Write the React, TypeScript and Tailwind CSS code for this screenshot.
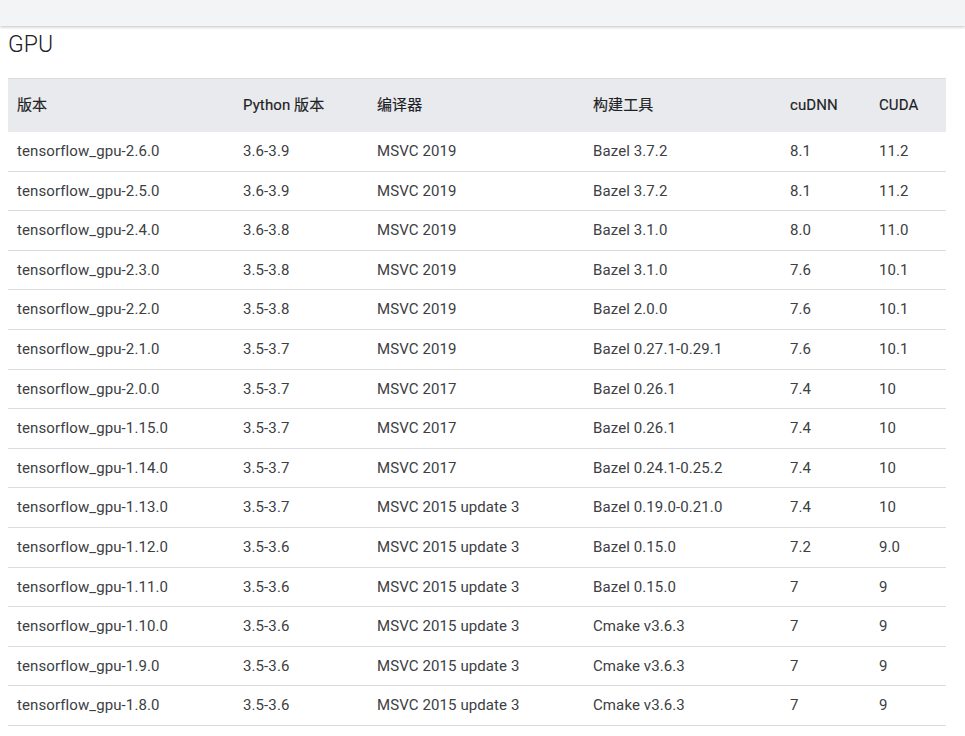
import React from 'react';

type Row = [string, string, string, string, string, string];

const rows: Row[] = [
  ['tensorflow_gpu-2.6.0', '3.6-3.9', 'MSVC 2019', 'Bazel 3.7.2', '8.1', '11.2'],
  ['tensorflow_gpu-2.5.0', '3.6-3.9', 'MSVC 2019', 'Bazel 3.7.2', '8.1', '11.2'],
  ['tensorflow_gpu-2.4.0', '3.6-3.8', 'MSVC 2019', 'Bazel 3.1.0', '8.0', '11.0'],
  ['tensorflow_gpu-2.3.0', '3.5-3.8', 'MSVC 2019', 'Bazel 3.1.0', '7.6', '10.1'],
  ['tensorflow_gpu-2.2.0', '3.5-3.8', 'MSVC 2019', 'Bazel 2.0.0', '7.6', '10.1'],
  ['tensorflow_gpu-2.1.0', '3.5-3.7', 'MSVC 2019', 'Bazel 0.27.1-0.29.1', '7.6', '10.1'],
  ['tensorflow_gpu-2.0.0', '3.5-3.7', 'MSVC 2017', 'Bazel 0.26.1', '7.4', '10'],
  ['tensorflow_gpu-1.15.0', '3.5-3.7', 'MSVC 2017', 'Bazel 0.26.1', '7.4', '10'],
  ['tensorflow_gpu-1.14.0', '3.5-3.7', 'MSVC 2017', 'Bazel 0.24.1-0.25.2', '7.4', '10'],
  ['tensorflow_gpu-1.13.0', '3.5-3.7', 'MSVC 2015 update 3', 'Bazel 0.19.0-0.21.0', '7.4', '10'],
  ['tensorflow_gpu-1.12.0', '3.5-3.6', 'MSVC 2015 update 3', 'Bazel 0.15.0', '7.2', '9.0'],
  ['tensorflow_gpu-1.11.0', '3.5-3.6', 'MSVC 2015 update 3', 'Bazel 0.15.0', '7', '9'],
  ['tensorflow_gpu-1.10.0', '3.5-3.6', 'MSVC 2015 update 3', 'Cmake v3.6.3', '7', '9'],
  ['tensorflow_gpu-1.9.0', '3.5-3.6', 'MSVC 2015 update 3', 'Cmake v3.6.3', '7', '9'],
  ['tensorflow_gpu-1.8.0', '3.5-3.6', 'MSVC 2015 update 3', 'Cmake v3.6.3', '7', '9'],
];

const headers = ['版本', 'Python 版本', '编译器', '构建工具', 'cuDNN', 'CUDA'];
const widths = ['w-[226px]', 'w-[134px]', 'w-[216px]', 'w-[197px]', 'w-[89px]', 'w-[76px]'];

const App: React.FC = () => {
  return (
    <div className="min-h-screen bg-white font-['Roboto','Noto_Sans_CJK_SC',sans-serif] text-[#3c4043]">
      {/* top bar */}
      <div className="h-[26px] bg-[#f3f4f6] shadow-[0_1px_3px_rgba(0,0,0,0.25)] relative z-10"></div>

      <h2 className="ml-2 mt-[7px] text-[23px] leading-[24px] font-light text-[#202124]">GPU</h2>

      <table className="ml-2 mt-[21px] w-[938px] border-collapse text-[15px] tracking-[0.1px] table-fixed">
        <thead>
          <tr className="h-[53px] bg-[#e8eaed] border-t border-[#dadce0]">
            {headers.map((h, i) => (
              <th
                key={h}
                className={`${widths[i]} pl-[9px] text-left align-middle font-normal text-[#202124] [-webkit-text-stroke:0.15px_#202124]`}
              >
                {h}
              </th>
            ))}
          </tr>
        </thead>
        <tbody>
          {rows.map((r) => (
            <tr key={r[0]} className="h-[39.6px] border-b border-[#dadce0]">
              {r.map((c, i) => (
                <td key={i} className="pl-[9px] align-middle">
                  {c}
                </td>
              ))}
            </tr>
          ))}
        </tbody>
      </table>
    </div>
  );
};

export default App;
